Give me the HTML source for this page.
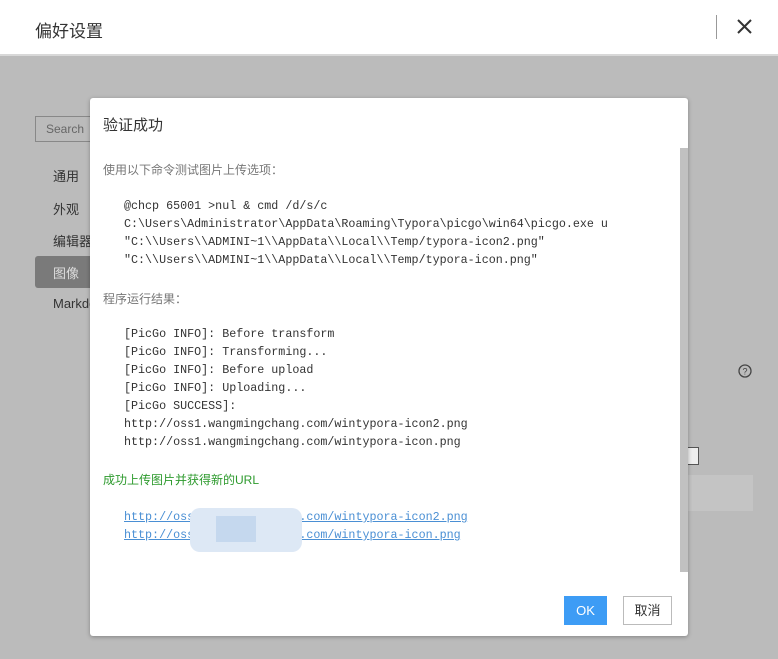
<!DOCTYPE html>
<html><head><meta charset="utf-8"><style>
*{margin:0;padding:0;box-sizing:border-box}
body{width:778px;height:659px;background:#bbbbbb;position:relative;overflow:hidden;font-family:"Liberation Sans","Noto Sans CJK SC",sans-serif}
.hdr{position:absolute;left:0;top:0;width:778px;height:56px;background:#fff;border-bottom:2px solid #d8d8d8}
.hdr .t{position:absolute;left:35px;top:17px;font-size:17px;color:#333}
.hdr .sep{position:absolute;left:716px;top:15px;width:1px;height:24px;background:#999}
.side{position:absolute;font-size:13px;color:#333}
.dlg{position:absolute;left:90px;top:98px;width:598px;height:538px;background:#fff;border-radius:3px;box-shadow:0 1px 4px rgba(0,0,0,.3)}
.ttl{position:absolute;left:13px;top:16px;font-size:15px;color:#333}
.p{position:absolute;left:13px;font-size:12px;color:#777}
pre{position:absolute;left:34px;font-family:"Liberation Mono",monospace;font-size:11.7px;line-height:18px;color:#333}
a{color:#4a8fd4;text-decoration:underline}
.blur{position:absolute;background:#dde8f5;border-radius:10px}
.sb{position:absolute;left:590px;top:50px;width:8px;height:424px;background:#c1c1c1}
.ok{position:absolute;left:474px;top:498px;width:43px;height:29px;background:#3d9cf5;color:#fff;font-size:13px;text-align:center;line-height:29px}
.cn{position:absolute;left:533px;top:498px;width:49px;height:29px;border:1px solid #bbb;color:#333;font-size:13px;text-align:center;line-height:27px}
</style></head><body>
<div class="hdr"><div class="t">偏好设置</div><div class="sep"></div>
<svg style="position:absolute;left:737px;top:19px" width="15" height="15"><path d="M1 1L14 14M14 1L1 14" stroke="#333" stroke-width="2"/></svg></div>
<div style="position:absolute;left:35px;top:116px;width:60px;height:26px;border:1px solid #888;font-size:12px;color:#666;padding:5px 10px">Search</div>
<div class="side" style="left:53px;top:166px">通用</div>
<div class="side" style="left:53px;top:199px">外观</div>
<div class="side" style="left:53px;top:231px">编辑器</div>
<div style="position:absolute;left:35px;top:256px;width:60px;height:32px;background:#7a7a7a;border-radius:3px"></div>
<div class="side" style="left:53px;top:263px;color:#ddd">图像</div>
<div class="side" style="left:53px;top:296px">Markdown</div>
<svg style="position:absolute;left:738px;top:364px" width="14" height="14"><circle cx="7" cy="7" r="6" fill="none" stroke="#444" stroke-width="1.3"/><text x="7" y="10.5" font-size="9" text-anchor="middle" fill="#444" font-family="Liberation Sans">?</text></svg>
<div style="position:absolute;left:686px;top:447px;width:13px;height:18px;background:#eee;border:1px solid #555"></div>
<div style="position:absolute;left:686px;top:475px;width:67px;height:36px;background:#c4c4c4"></div>
<div class="dlg">
<div class="ttl">验证成功</div>
<div class="p" style="top:63px">使用以下命令测试图片上传选项：</div>
<pre style="top:99px">@chcp 65001 &gt;nul &amp; cmd /d/s/c
C:\Users\Administrator\AppData\Roaming\Typora\picgo\win64\picgo.exe u
"C:\\Users\\ADMINI~1\\AppData\\Local\\Temp/typora-icon2.png"
"C:\\Users\\ADMINI~1\\AppData\\Local\\Temp/typora-icon.png"</pre>
<div class="p" style="top:192px">程序运行结果：</div>
<pre style="top:227px">[PicGo INFO]: Before transform
[PicGo INFO]: Transforming...
[PicGo INFO]: Before upload
[PicGo INFO]: Uploading...
[PicGo SUCCESS]:
http://oss1.wangmingchang.com/wintypora-icon2.png
http://oss1.wangmingchang.com/wintypora-icon.png</pre>
<div class="p" style="top:373px;color:#2d9a2d">成功上传图片并获得新的URL</div>
<pre style="top:410px"><a>http://oss1.wangmingchang.com/wintypora-icon2.png</a>
<a>http://oss1.wangmingchang.com/wintypora-icon.png</a></pre>
<div class="blur" style="left:100px;top:410px;width:112px;height:44px"></div>
<div style="position:absolute;left:126px;top:418px;width:40px;height:26px;background:#c5d8ee"></div>
<div class="sb"></div>
<div class="ok">OK</div><div class="cn">取消</div>
</div>
</body></html>
